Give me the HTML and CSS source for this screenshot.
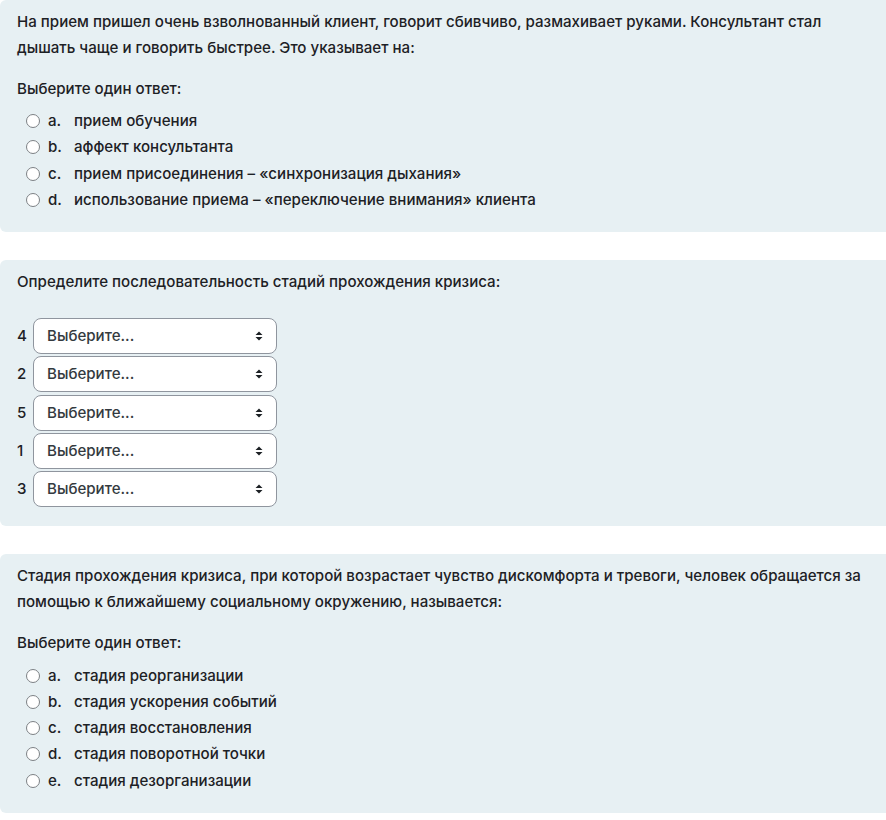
FILE: index.html
```html
<!DOCTYPE html>
<html lang="ru">
<head>
<meta charset="utf-8">
<link rel="stylesheet" href="styles.css">
</head>
<body>
<div class="page">
  <section class="card">
    <p class="qtext">На прием пришел очень взволнованный клиент, говорит сбивчиво, размахивает руками. Консультант стал дышать чаще и говорить быстрее. Это указывает на:</p>
    <p class="prompt">Выберите один ответ:</p>
    <div class="answers">
      <label class="opt"><span class="radio"></span><span class="letter">a.</span><span>прием обучения</span></label>
      <label class="opt"><span class="radio"></span><span class="letter">b.</span><span>аффект консультанта</span></label>
      <label class="opt"><span class="radio"></span><span class="letter">c.</span><span>прием присоединения – «синхронизация дыхания»</span></label>
      <label class="opt"><span class="radio"></span><span class="letter">d.</span><span>использование приема – «переключение внимания» клиента</span></label>
    </div>
  </section>

  <section class="card">
    <p class="qtext">Определите последовательность стадий прохождения кризиса:</p>
    <div class="matches">
      <div class="mrow"><span class="num">4</span><div class="sel"><span>Выберите...</span><svg class="caret" width="8" height="10" viewBox="0 0 8 10"><path d="M4 0.5 L7.5 4 H0.5 Z M4 9.5 L7.5 6 H0.5 Z" fill="#1d2125"/></svg></div></div>
      <div class="mrow"><span class="num">2</span><div class="sel"><span>Выберите...</span><svg class="caret" width="8" height="10" viewBox="0 0 8 10"><path d="M4 0.5 L7.5 4 H0.5 Z M4 9.5 L7.5 6 H0.5 Z" fill="#1d2125"/></svg></div></div>
      <div class="mrow"><span class="num">5</span><div class="sel"><span>Выберите...</span><svg class="caret" width="8" height="10" viewBox="0 0 8 10"><path d="M4 0.5 L7.5 4 H0.5 Z M4 9.5 L7.5 6 H0.5 Z" fill="#1d2125"/></svg></div></div>
      <div class="mrow"><span class="num">1</span><div class="sel"><span>Выберите...</span><svg class="caret" width="8" height="10" viewBox="0 0 8 10"><path d="M4 0.5 L7.5 4 H0.5 Z M4 9.5 L7.5 6 H0.5 Z" fill="#1d2125"/></svg></div></div>
      <div class="mrow"><span class="num">3</span><div class="sel"><span>Выберите...</span><svg class="caret" width="8" height="10" viewBox="0 0 8 10"><path d="M4 0.5 L7.5 4 H0.5 Z M4 9.5 L7.5 6 H0.5 Z" fill="#1d2125"/></svg></div></div>
    </div>
  </section>

  <section class="card">
    <p class="qtext">Стадия прохождения кризиса, при которой возрастает чувство дискомфорта и тревоги, человек обращается за помощью к ближайшему социальному окружению, называется:</p>
    <p class="prompt">Выберите один ответ:</p>
    <div class="answers">
      <label class="opt"><span class="radio"></span><span class="letter">a.</span><span>стадия реорганизации</span></label>
      <label class="opt"><span class="radio"></span><span class="letter">b.</span><span>стадия ускорения событий</span></label>
      <label class="opt"><span class="radio"></span><span class="letter">c.</span><span>стадия восстановления</span></label>
      <label class="opt"><span class="radio"></span><span class="letter">d.</span><span>стадия поворотной точки</span></label>
      <label class="opt"><span class="radio"></span><span class="letter">e.</span><span>стадия дезорганизации</span></label>
    </div>
  </section>
</div>
</body>
</html>
```

FILE: styles.css
```css
html, body {
  margin: 0;
  padding: 0;
  background: #ffffff;
  overflow-x: hidden;
}
body {
  font-family: Inter, "Noto Sans", sans-serif;
  font-size: 15.1px;
  font-weight: 500;
  color: #1d2125;
  line-height: 26px;
}
.page {
  display: flex;
  flex-direction: column;
  gap: 28px;
  margin-right: -8px;
}
.card {
  background: #e7f0f3;
  border-radius: 6px 0 0 6px;
  padding: 9px 17px 19px 17px;
}
.qtext {
  margin: 0;
}
.prompt {
  margin: 15px 0 6px 0;
}
.answers {
  display: flex;
  flex-direction: column;
  padding-left: 9px;
}
.opt {
  display: flex;
  align-items: center;
  height: 26.3px;
}
.radio {
  width: 12px;
  height: 12px;
  border: 1px solid #7d8185;
  border-radius: 50%;
  background: #ffffff;
  margin-right: 8px;
  flex: none;
}
.letter {
  width: 26px;
  flex: none;
}
.matches {
  display: flex;
  flex-direction: column;
  gap: 2.3px;
  margin-top: 23px;
}
.mrow {
  display: flex;
  align-items: center;
}
.num {
  width: 16px;
  flex: none;
}
.sel {
  width: 244px;
  height: 36px;
  box-sizing: border-box;
  border: 1px solid #8f959e;
  border-radius: 8px;
  background: #ffffff;
  display: flex;
  align-items: center;
  justify-content: space-between;
  padding: 0 13px 0 13px;
  color: #343a40;
}
.caret {
  display: block;
}
```
